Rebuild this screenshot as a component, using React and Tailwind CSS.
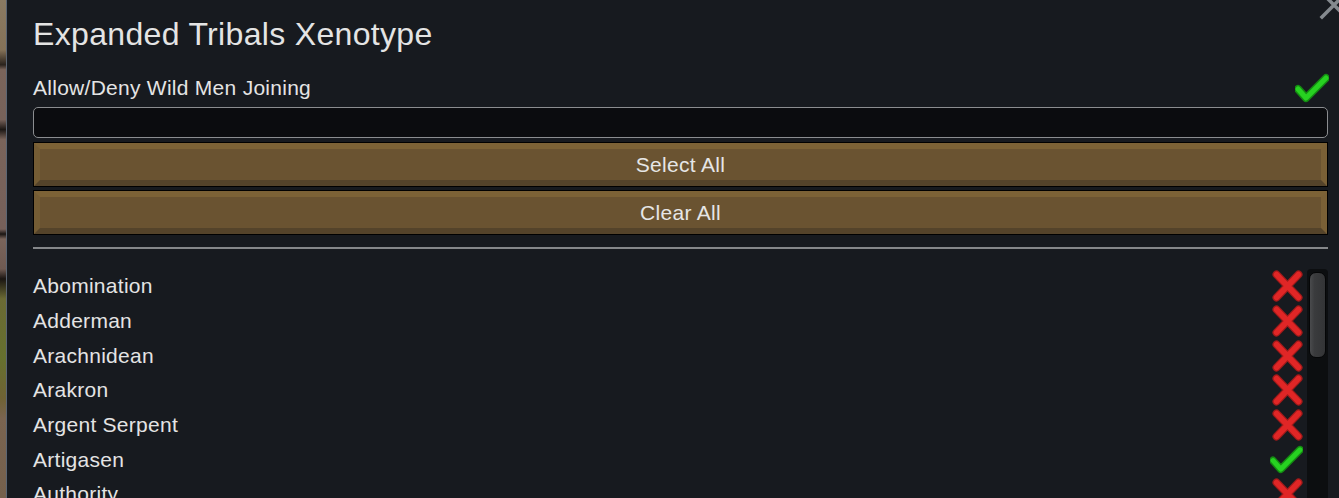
import React from 'react';

const xenotypes = [
  { name: 'Abomination', allowed: false },
  { name: 'Adderman', allowed: false },
  { name: 'Arachnidean', allowed: false },
  { name: 'Arakron', allowed: false },
  { name: 'Argent Serpent', allowed: false },
  { name: 'Artigasen', allowed: true },
  { name: 'Authority', allowed: false },
];

function CheckMark({ className = '' }) {
  return (
    <svg viewBox="0 0 34 30" className={className}>
      <path d="M3 16 L11 25 L31 5" fill="none" stroke="#148a12" strokeWidth="8" strokeLinecap="round" strokeLinejoin="round" />
      <path d="M3 16 L11 25 L31 5" fill="none" stroke="#27d121" strokeWidth="5" strokeLinecap="round" strokeLinejoin="round" />
    </svg>
  );
}

function Cross({ className = '' }) {
  return (
    <svg viewBox="0 0 31 32" className={className}>
      <g fill="none" strokeLinecap="round">
        <path d="M4.5 4.5 L26.5 27.5 M26.5 4.5 L4.5 27.5" stroke="#9e1a1a" strokeWidth="8" />
        <path d="M4.5 4.5 L26.5 27.5 M26.5 4.5 L4.5 27.5" stroke="#e02626" strokeWidth="5.5" />
      </g>
    </svg>
  );
}

function BevelButton({ children }) {
  return (
    <div className="h-[45px] border border-black">
      <div className="h-full flex items-center justify-center border-[6px] border-t-[#7c6236] border-l-[#745c34] border-r-[#7a6036] border-b-[#54432a] bg-[#6a5331] text-[21px] leading-6 tracking-[0.3px] text-[#e6e6e6]">
        {children}
      </div>
    </div>
  );
}

export default function App() {
  return (
    <div className="w-[1339px] h-[498px] overflow-hidden flex font-['Liberation_Sans',Arial,sans-serif]">
      {/* map behind the dialog */}
      <div className="w-[6px] h-full bg-[linear-gradient(to_bottom,#8a7a62_0%,#857258_10%,#2a221c_13%,#7a645a_14%,#77625a_24%,#1c1714_26%,#7a645a_28%,#76605a_46%,#1a1512_47%,#7a645a_48%,#6f5a52_54%,#1a1512_56%,#6b6a34_60%,#66702e_72%,#6f6234_80%,#7a6450_84%,#75604c_100%)]" />
      <div className="w-px h-full bg-[#5b6573]" />

      <div className="relative flex-1 h-full bg-[#171a1f] pl-[26px] pr-[11px] pt-[18px] text-[#e4e4e4]">
        <svg viewBox="0 0 30 30" className="absolute -right-[10px] -top-[10px] w-[30px] h-[30px]">
          <path d="M3 3 L27 27 M27 3 L3 27" stroke="#858a8f" strokeWidth="3.5" strokeLinecap="square" fill="none" />
        </svg>

        <h1 className="text-[32px] leading-8 font-normal tracking-[0.33px]">Expanded Tribals Xenotype</h1>

        <div className="mt-[22px] h-[32px] flex items-center justify-between">
          <span className="text-[21px] leading-6 tracking-[0.27px]">Allow/Deny Wild Men Joining</span>
          <CheckMark className="w-[34px] h-[30px] -mr-[1px]" />
        </div>

        <div className="mt-[3px] h-[31px] rounded-[5px] border-[1.5px] border-[#8b8d90] bg-[#0b0c0f]" />

        <div className="mt-[4px]">
          <BevelButton>Select All</BevelButton>
        </div>
        <div className="mt-[3px]">
          <BevelButton>Clear All</BevelButton>
        </div>

        <div className="mt-[12px] h-[2px] bg-[#85878a]" />

        <div className="mt-[20px] flex">
          <div className="flex-1 pr-[4px]">
            {xenotypes.map(x => (
              <div key={x.name} className="h-[34.67px] flex items-center justify-between">
                <span className="text-[21px] leading-6 tracking-[0.27px]">{x.name}</span>
                {x.allowed ? <CheckMark className="w-[33px] h-[29px]" /> : <Cross className="w-[31px] h-[32px]" />}
              </div>
            ))}
          </div>
          <div className="w-[21px] h-[240px] rounded-t-[4px] bg-[#0c0e10] pt-[3px] px-[2px]">
            <div className="h-[86px] rounded-[7px] border border-[#050607] bg-[linear-gradient(to_right,#4a4b4d_0%,#3a3b3d_30%,#333436_100%)]" />
          </div>
        </div>
      </div>
    </div>
  );
}
